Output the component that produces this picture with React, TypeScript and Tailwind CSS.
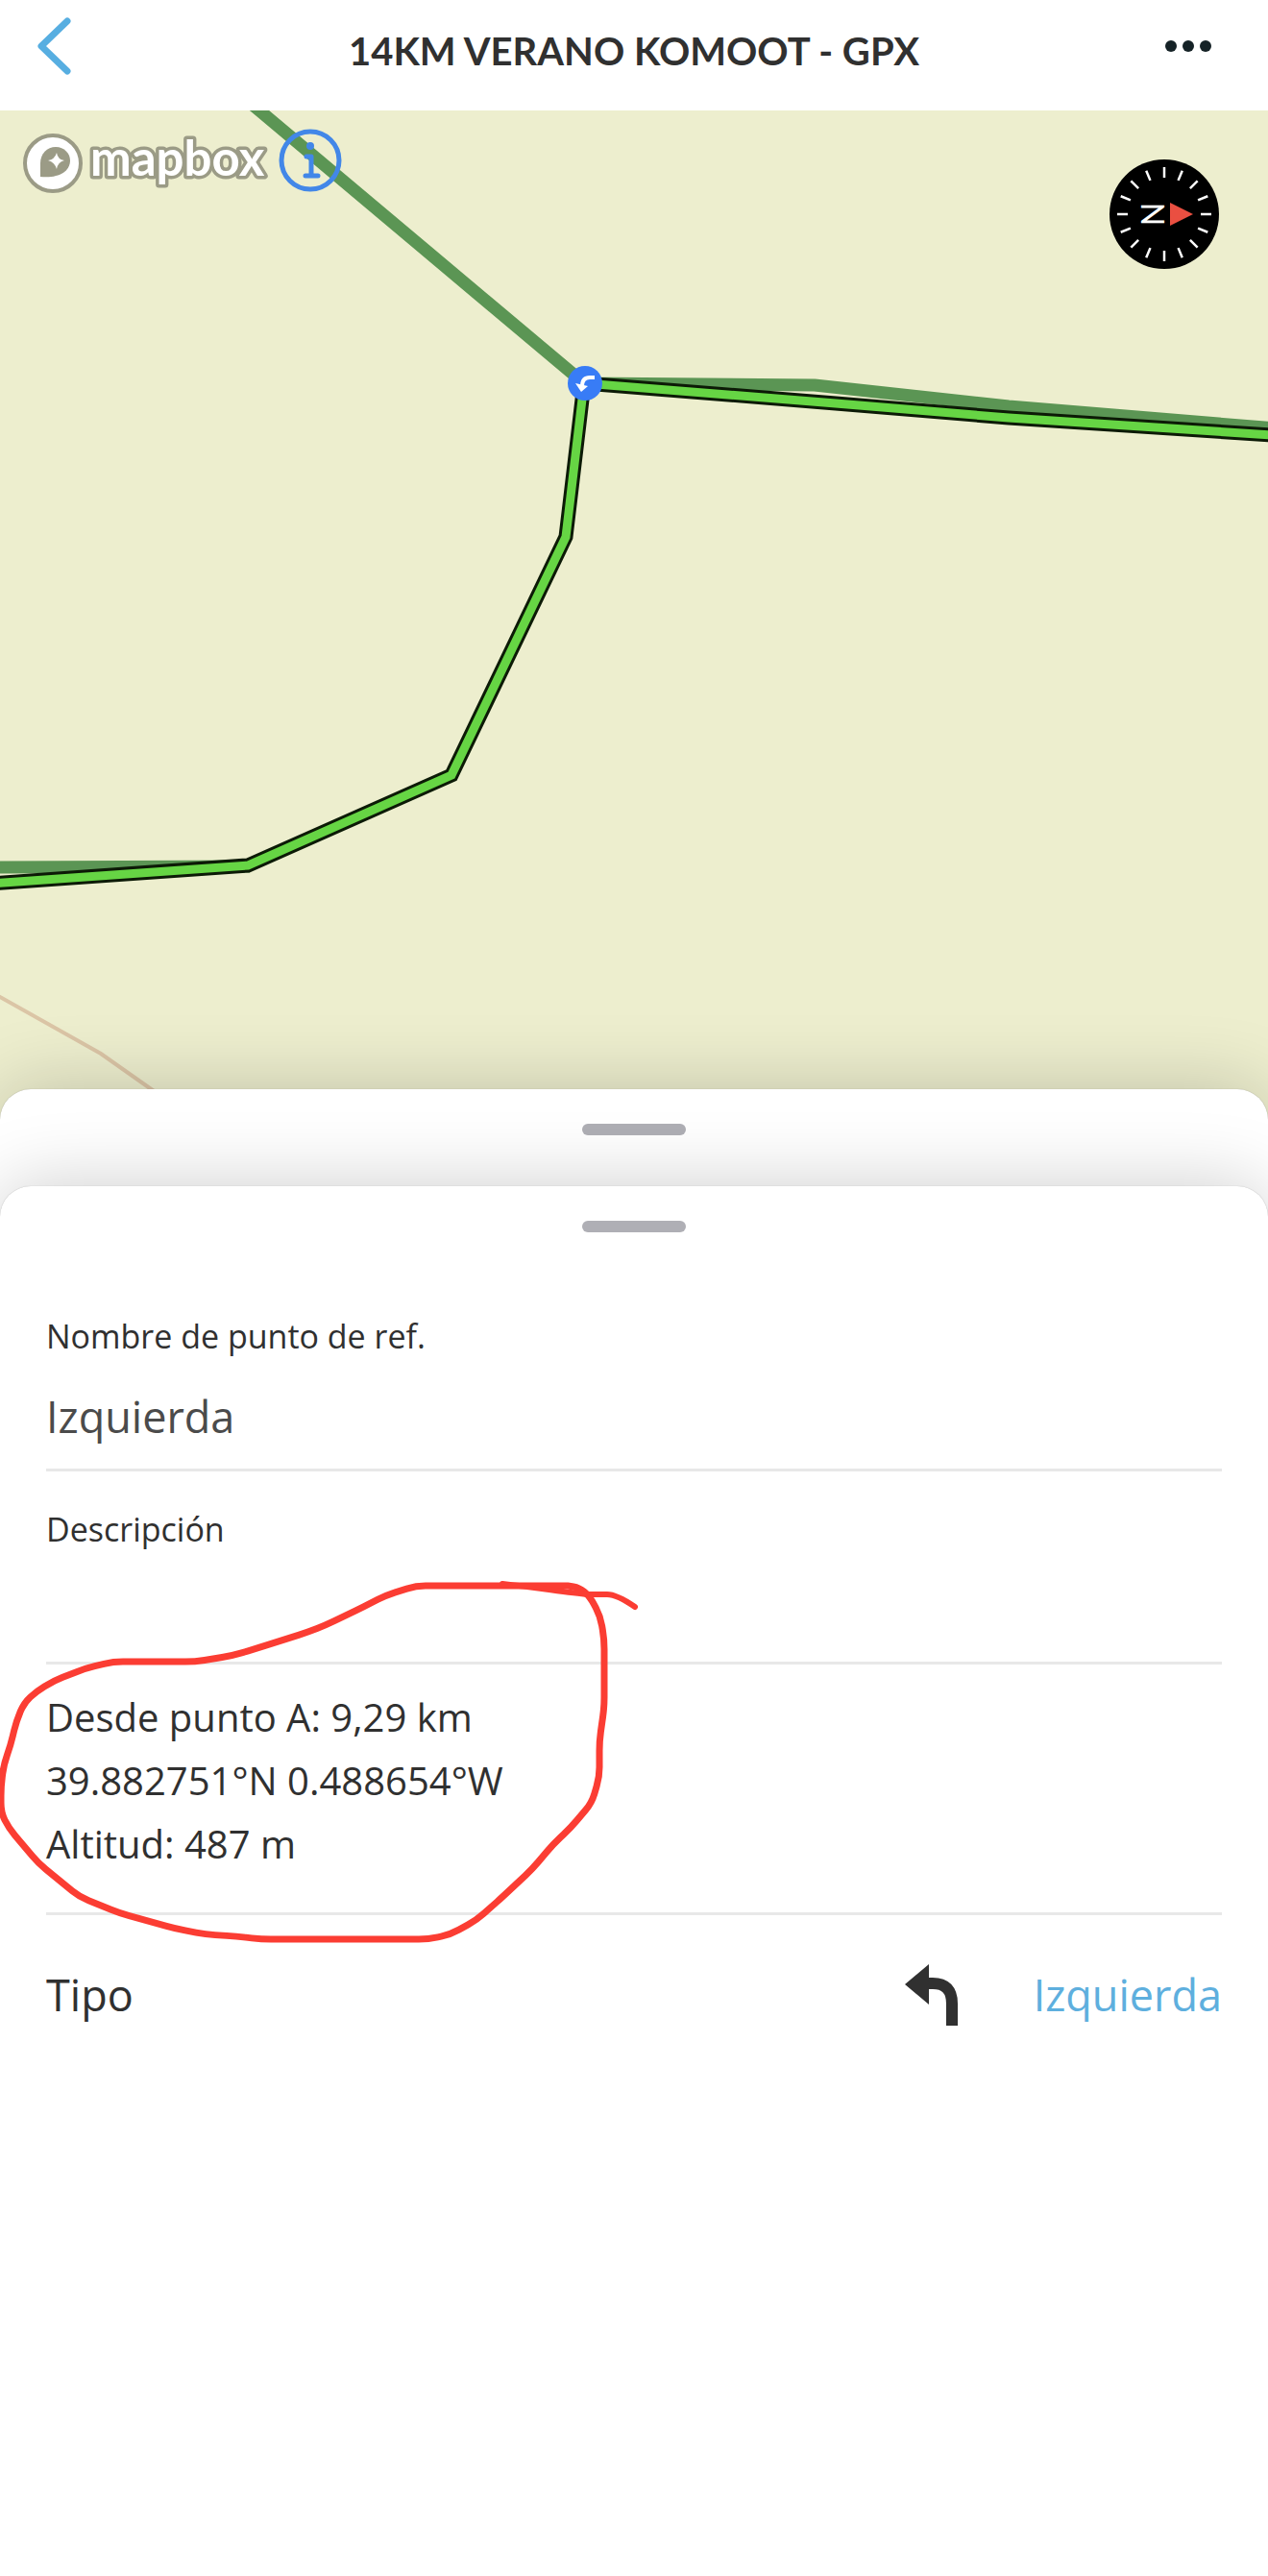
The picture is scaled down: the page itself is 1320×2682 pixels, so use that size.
import { useState } from 'react'

const TICKS = Array.from({ length: 16 }, (_, i) => i * 22.5);

const MARK_LOOP = [
  [591, 1651], [433, 1651], [402, 1661], [370, 1677], [339, 1692], [321, 1699], [268, 1716], [241, 1724], [203, 1730],
  [118, 1730], [89, 1737], [56, 1750], [38, 1761], [25, 1773], [17, 1792], [11, 1817], [4, 1837], [1, 1860], [1, 1887], [9, 1903],
  [40, 1940], [83, 1975], [125, 1992], [183, 2008], [214, 2014], [246, 2016], [272, 2019], [446, 2019],
  [469, 2014], [496, 1999], [513, 1984], [522, 1976], [554, 1946], [576, 1920], [594, 1903], [616, 1877],
  [624, 1850], [624, 1813], [629, 1777], [629, 1707], [625, 1683], [614, 1662], [603, 1653], [591, 1651],
];

// rounds every corner a little so the stroke looks hand drawn
function smoothPath(points: number[][]) {
  let d = `M${points[0][0]} ${points[0][1]}`;
  for (let i = 1; i < points.length - 1; i++) {
    const [px, py] = points[i - 1];
    const [x, y] = points[i];
    const [nx, ny] = points[i + 1];
    const before = Math.min(0.5, 10 / Math.hypot(px - x, py - y));
    const after = Math.min(0.5, 10 / Math.hypot(nx - x, ny - y));
    d += ` L${x + (px - x) * before} ${y + (py - y) * before}`;
    d += ` Q${x} ${y} ${x + (nx - x) * after} ${y + (ny - y) * after}`;
  }
  const last = points[points.length - 1];
  return `${d} L${last[0]} ${last[1]}`;
}

function Header() {
  return (
    <header className="flex h-[115px] items-start justify-between bg-white px-8">
      <button type="button" aria-label="Atrás" className="w-24 pt-4">
        <svg viewBox="0 0 96 64" className="w-24 h-16" fill="none">
          <path d="M38 6 L11 32 L38 58" stroke="#57aee1" strokeWidth="7" strokeLinecap="round" strokeLinejoin="round" />
        </svg>
      </button>
      <h1 className="pt-7 text-[40px] leading-[50px] font-bold text-[#303030]">14KM VERANO KOMOOT - GPX</h1>
      <button type="button" aria-label="Más opciones" className="flex w-24 justify-end gap-[6px] pr-[27px] pt-[42px]">
        <span className="size-3 rounded-full bg-[#152226]" />
        <span className="size-3 rounded-full bg-[#152226]" />
        <span className="size-3 rounded-full bg-[#152226]" />
      </button>
    </header>
  );
}

function MapboxLogo() {
  return (
    <svg viewBox="0 0 266 74" className="w-[266px] h-[74px] overflow-visible">
      <circle cx="31" cy="40" r="29" fill="#fff" stroke="#9b9b86" strokeWidth="4" />
      <path d="M18 54 V40 C18 30 25 23 34 23 C43 23 49 30 49 37 C49 49 36 56 18 54 Z" fill="#9b9b86" />
      <path d="M35 29 Q36 36 43 37 Q36 39 35 46 Q33 39 26 37 Q33 36 35 29 Z" fill="#fff" />
      <text x="70" y="53" fontSize="51" fontWeight="700" fill="#fff" stroke="#9b9b86" strokeWidth="7" strokeLinejoin="round" paintOrder="stroke">
        mapbox
      </text>
    </svg>
  );
}

function Compass() {
  return (
    <svg viewBox="0 0 114 114" className="size-[114px]">
      <circle cx="57" cy="57" r="57" fill="#000" />
      {TICKS.map(angle => (
        <path key={angle} d="M57 8 V19" stroke="#fff" strokeWidth="2.5" transform={`rotate(${angle} 57 57)`} />
      ))}
      <text x="33" y="57" fontSize="32" fill="#fff" textAnchor="middle" transform="rotate(90 33 57)">N</text>
      <path d="M63 45 L87 57 L63 69 Z" fill="#ea4f41" />
    </svg>
  );
}

function RouteMap() {
  return (
    <section aria-label="Mapa" className="relative bg-[#edeece]">
      <svg viewBox="0 115 1320 1060" className="block w-full h-auto" fill="none">
        <g stroke="#5b9554" strokeWidth="13" strokeLinejoin="round">
          <path d="M246 95 L270 115 L608 399 L848 401 L1050 423 L1340 447" />
          <path d="M-10 903 L260 902" />
        </g>
        <path d="M-10 1032 L0 1038 L105 1097 L190 1157" stroke="#dbc5a6" strokeWidth="4" />
        <path d="M-10 920 L258 901 L470 807 L589 559 L608 399 L870 420 L1050 435 L1340 454" stroke="#0c1a06" strokeWidth="15" />
        <path d="M-10 920 L258 901 L470 807 L589 559 L608 399 L870 420 L1050 435 L1340 454" stroke="#66d544" strokeWidth="9" />
        <circle cx="609" cy="399" r="18" fill="#387cf6" />
        <path d="M619 393 H614 Q606 393 606 402" stroke="#fff" strokeWidth="4" />
        <path d="M599 399 L612 402 L605 408 Z" fill="#fff" />
      </svg>
      <div className="absolute left-6 top-[15px] flex items-center">
        <a href="#mapbox" aria-label="mapbox">
          <MapboxLogo />
        </a>
        <button type="button" aria-label="Información">
          <svg viewBox="0 0 66 66" className="size-[66px]" fill="none" stroke="#4287e8" strokeLinecap="round">
            <circle cx="33" cy="33" r="30" strokeWidth="5" />
            <path d="M29 29 H34 V49 M28 49 H41" strokeWidth="5" strokeLinejoin="round" />
            <circle cx="33" cy="18" r="4" fill="#4287e8" stroke="none" />
          </svg>
        </button>
      </div>
      <button type="button" aria-label="Brújula" className="absolute right-[51px] top-[51px]">
        <Compass />
      </button>
    </section>
  );
}

function Grabber() {
  return <div className="mx-auto h-3 w-[108px] rounded-full bg-[#afafb5]" />;
}

function HandMark() {
  return (
    <svg viewBox="0 1640 680 390" className="pointer-events-none absolute left-0 top-[405px] w-[680px] h-[390px]" fill="none" stroke="#fb3d33" strokeWidth="7" strokeLinecap="round">
      <path d={smoothPath(MARK_LOOP)} />
      <path d="M523 1649 C560 1653 590 1658 612 1660 H632 Q642 1660 661 1673" strokeWidth="6" />
    </svg>
  );
}

function PointForm() {
  const [name, setName] = useState('Izquierda');
  const [description, setDescription] = useState('');

  return (
    <form className="px-12 pt-[84px] font-['Open_Sans',sans-serif] text-[#303030]" onSubmit={e => e.preventDefault()}>
      <div className="border-b-3 border-[#e8e8e8]">
        <label htmlFor="name" className="block text-[34px] leading-[48px]">Nombre de punto de ref.</label>
        <input
          id="name"
          value={name}
          onChange={e => setName(e.target.value)}
          className="block w-full h-[114px] pt-1 text-[45px] text-[#4b4b4b] outline-none"
        />
      </div>
      <div className="border-b-3 border-[#e8e8e8] pt-9">
        <label htmlFor="description" className="block text-[34px] leading-[48px]">Descripción</label>
        <input
          id="description"
          value={description}
          onChange={e => setDescription(e.target.value)}
          className="block w-full h-[114px] text-[45px] text-[#4b4b4b] outline-none"
        />
      </div>
      <div className="border-b-3 border-[#e8e8e8] pt-[22px] pb-[38px] text-[40px] leading-[66px]">
        <p>Desde punto A: 9,29 km</p>
        <p>39.882751°N 0.488654°W</p>
        <p>Altitud: 487 m</p>
      </div>
      <div className="flex h-[166px] items-center justify-between text-[45px]">
        <span id="type-label">Tipo</span>
        <button type="button" aria-labelledby="type-label type-value" className="flex items-center gap-19 text-[#5eafde]">
          <svg viewBox="0 0 58 66" className="w-[58px] h-[66px]" fill="none">
            <path d="M0 22 L25 1 V43 Z" fill="#303030" />
            <path d="M24 21 H29 Q49 21 49 42 V65" stroke="#303030" strokeWidth="12" />
          </svg>
          <span id="type-value">Izquierda</span>
        </button>
      </div>
    </form>
  );
}

function App() {
  return (
    <div className="flex min-h-screen flex-col overflow-hidden bg-white font-[Lato,sans-serif]">
      <Header />
      <RouteMap />
      <main className="relative -mt-[41px] flex grow flex-col rounded-t-[32px] bg-white pt-9 shadow-[0_0_80px_rgba(0,0,0,0.2),0_0_1px_rgba(0,0,0,0.3)]">
        <Grabber />
        <div className="relative mt-[53px] grow rounded-t-[32px] bg-white pt-9 shadow-[0_0_80px_rgba(0,0,0,0.2),0_0_1px_rgba(0,0,0,0.3)]">
          <Grabber />
          <PointForm />
          <HandMark />
        </div>
      </main>
    </div>
  );
}

export default App;
